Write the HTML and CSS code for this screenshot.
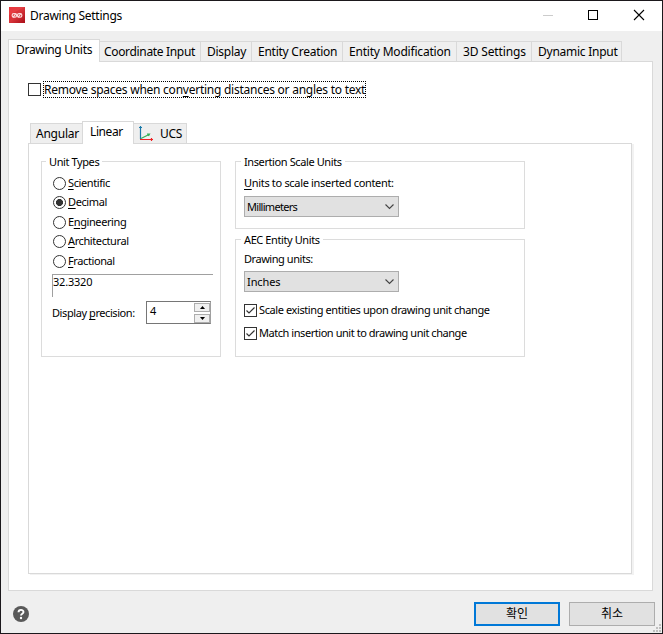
FILE: index.html
```html
<!DOCTYPE html>
<html lang="ko">
<head>
<meta charset="utf-8">
<title>Drawing Settings</title>
<link rel="stylesheet" href="styles.css">
</head>
<body>
<div class="window">
  <header class="titlebar">
    <svg class="app-icon" width="16" height="16" viewBox="0 0 16 16"><defs><linearGradient id="red" x1="0" y1="0" x2="1" y2="1"><stop offset="0" stop-color="#e4242c"/><stop offset=".5" stop-color="#d8343a"/><stop offset="1" stop-color="#a90d18"/></linearGradient></defs><rect width="16" height="16" fill="url(#red)"/><path d="M0 0H16L0 8Z" fill="#ff6b6b" opacity=".25"/><g fill="none" stroke="#fbdcdc" stroke-width="1.200"><rect x="3.200" y="6.600" width="4.300" height="3.600" rx="1.500"/><rect x="8.500" y="6.600" width="4.300" height="3.600" rx="1.500"/><path d="M4 10.300L7 6.500M9 10.300L12 6.500"/></g></svg>
    <h1 class="title">Drawing Settings</h1>
    <svg class="controls" width="110" height="14" viewBox="0 0 110 14" fill="none"><path d="M2 7.500H12" stroke="#ccc"/><rect x="47.500" y="2.500" width="9" height="9" stroke="#000"/><path d="M93 2L103 12M103 2L93 12" stroke="#000" stroke-width="1.100"/></svg>
  </header>

  <nav class="tabs">
    <div class="tab active t1">Drawing Units</div>
    <div class="tab t2">Coordinate Input</div>
    <div class="tab t3">Display</div>
    <div class="tab t4">Entity Creation</div>
    <div class="tab t5">Entity Modification</div>
    <div class="tab t6">3D Settings</div>
    <div class="tab t7">Dynamic Input</div>
  </nav>

  <main class="panel">
    <label class="remove"><span class="box"></span><span class="focus">Remove spaces when con<u>v</u>erting distances or angles to text</span></label>
    <nav class="tabs inner">
      <div class="tab a1">Angular</div>
      <div class="tab active a2">Linear</div>
      <div class="tab a3"><svg width="16" height="16" viewBox="0 0 16 16" fill="none"><path d="M2.500 13V0M1 1.500H4" stroke="#1878a8" stroke-width="1.200"/><path d="M3 12.500L11 8.500M9 8H11.500L10.500 10" stroke="#35b158" stroke-width="1.200"/><path d="M2 13.500H15M13.500 12V15" stroke="#ed2224" stroke-width="1.200"/></svg>UCS</div>
    </nav>
    <section class="page">
      <div class="group types">
        <div class="legend">Unit Types</div>
        <div class="radios">
          <label><i></i><span><u>S</u>cientific</span></label>
          <label><i class="on"></i><span><u>D</u>ecimal</span></label>
          <label><i></i><span>E<u>n</u>gineering</span></label>
          <label><i></i><span><u>A</u>rchitectural</span></label>
          <label><i></i><span><u>F</u>ractional</span></label>
        </div>
        <div class="sample">32.3320</div>
        <div class="precision">
          <span>Display <u>p</u>recision:</span>
          <div class="spin"><span>4</span><div class="arrows"><b><svg width="5" height="3"><path d="M0 3L2.500 0L5 3Z"/></svg></b><b><svg width="5" height="3"><path d="M0 0L2.500 3L5 0Z"/></svg></b></div></div>
        </div>
      </div>
      <div class="column">
        <div class="group insertion">
          <div class="legend">Insertion Scale Units</div>
          <div class="field"><u>U</u>nits to scale inserted content:</div>
          <div class="combo millimeters"><span>Millimeters</span><svg width="9" height="6" fill="none"><path d="M.5 .5L4.500 4.500L8.500 .5" stroke="#444" stroke-width="1.100"/></svg></div>
        </div>
        <div class="group aec">
          <div class="legend">AEC Entity Units</div>
          <div class="field">Drawing units:</div>
          <div class="combo inches"><span>Inches</span><svg width="9" height="6" fill="none"><path d="M.5 .5L4.500 4.500L8.500 .5" stroke="#444" stroke-width="1.100"/></svg></div>
          <label class="check"><span class="box"><svg width="11" height="11" fill="none"><path d="M1.500 5.500L4 8L9.500 2.500" stroke="#333" stroke-width="1.200"/></svg></span><span>Scale existing entities upon drawing unit change</span></label>
          <label class="check"><span class="box"><svg width="11" height="11" fill="none"><path d="M1.500 5.500L4 8L9.500 2.500" stroke="#333" stroke-width="1.200"/></svg></span><span class="match">Match insertion unit to drawing unit change</span></label>
        </div>
      </div>
    </section>
  </main>

  <footer class="footer">
    <svg width="16" height="16" viewBox="0 0 16 16"><circle cx="8" cy="8" r="8" fill="#595959"/><path d="M5.500 6.300C5.500 3 10.500 3.200 10.500 6C10.500 7.700 8 7.700 8 9.500" fill="none" stroke="#fff" stroke-width="1.900"/><circle cx="8" cy="12" r="1.200" fill="#fff"/></svg>
    <button class="btn primary">확인</button>
    <button class="btn">취소</button>
  </footer>
  <svg class="grip" width="8" height="8" fill="#bfbfbf"><path d="M6 0h2v2h-2zM3 3h2v2h-2zM6 3h2v2h-2zM0 6h2v2h-2zM3 6h2v2h-2zM6 6h2v2h-2z"/></svg>
</div>
</body>
</html>
```
FILE: styles.css
```css
* { box-sizing: border-box; }
body { margin: 0; font: 12px/16px "Noto Sans", "Noto Sans CJK KR", sans-serif; color: #000; }
svg { display: block; flex: none; }
u { text-decoration: underline; text-underline-offset: 2px; text-decoration-thickness: 1px; text-decoration-skip-ink: none; }
.window { position: relative; width: 663px; height: 634px; border: 1px solid #1b181c; background: #efefef; display: flex; flex-direction: column; overflow: hidden; white-space: nowrap; }
.titlebar { height: 30px; flex: none; background: #fff; display: flex; align-items: center; padding: 0 11px 2px 8px; }
.title { margin: 2px 0 0 5px; font-size: 12px; font-weight: 400; letter-spacing: -.27px; }
.controls { margin-left: auto; }
.tabs { height: 23px; margin: 8px 0 -1px 7px; display: flex; align-items: flex-end; position: relative; flex: none; letter-spacing: -.25px; }
.tab { height: 21px; border: 1px solid #d9d9d9; border-left: 0; padding: 2px 0 0 4px; background: #efefef; flex: none; }
.tab.active { height: 23px; border-left: 1px solid #d9d9d9; border-bottom: 0; background: #fff; padding: 2px 0 0 7px; }
.t1 { width: 92px; letter-spacing: -.3px; }
.t2 { width: 101px; letter-spacing: -.33px; }
.t3 { width: 51px; padding-left: 6px; }
.t4 { width: 91px; padding-left: 6px; }
.t5 { width: 114px; padding-left: 6px; letter-spacing: -.2px; }
.t6 { width: 75px; padding-left: 6px; letter-spacing: -.15px; }
.t7 { width: 90px; padding-left: 6px; }
.panel { margin-left: 7px; width: 645px; height: 530px; flex: none; background: #fff; border: 1px solid #d9d9d9; padding: 18px 0 0 19px; }
.remove { display: flex; align-items: center; height: 18px; }
.box { width: 13px; height: 13px; border: 1px solid #333; background: #fff; flex: none; }
.focus { width: 323px; height: 17px; line-height: 15px; margin-left: 2px; border: 1px dotted #000; letter-spacing: -.25px; }
.inner { margin: 23px 0 -1px 2px; }
.inner .a1 { border-left: 1px solid #d9d9d9; border-right: 0; padding-left: 5px; width: 52px; }
.inner .a2 { width: 52px; padding: 2px 0 0 7px; letter-spacing: -.4px; }
.inner .a3 { width: 53px; padding: 2px 0 0 4px; display: flex; gap: 6px; }
.page { width: 604px; height: 431px; border: 1px solid #d9d9d9; box-shadow: 2px 1px 0 #f2f2f2; padding: 17px 0 0 12px; display: flex; gap: 14px; align-items: flex-start; font-size: 11px; line-height: 14px; letter-spacing: -.4px; }
.group { border: 1px solid #dcdcdc; }
.legend { width: max-content; background: #fff; padding: 0 3px; height: 14px; margin: -7px 0 0 5px; }
.types { width: 180px; height: 196px; }
.types .legend { margin-left: 4px; }
.radios { margin: 7px 0 0 11px; display: grid; grid-template-rows: 19px 20px 19px 20px 19px; }
.radios label { display: flex; align-items: center; height: 14px; gap: 2px; }
.radios i { width: 13px; height: 13px; border: 1px solid #333; border-radius: 50%; flex: none; }
.radios .on { background: radial-gradient(circle, #333 0 3.2px, #fff 3.8px); }
.sample { width: 161px; height: 23px; margin: 1px 0 0 10px; border: solid #a0a0a0; border-width: 1px 0 0 1px; letter-spacing: -.2px; }
.precision { margin: 4px 0 0 10px; display: flex; align-items: center; width: 159px; justify-content: space-between; }
.precision > span { letter-spacing: -.42px; }
.spin { width: 65px; height: 23px; border: 1px solid #a0a0a0; border-color: #767676 #a0a0a0 #767676 #767676; display: flex; justify-content: space-between; padding: 2px 0 0 3px; }
.arrows { display: grid; gap: 1px; margin-top: -1px; }
.arrows b { width: 16px; height: 9px; border: 1px solid #adadad; background: #f0f0f0; display: flex; align-items: center; justify-content: center; }
.column { display: grid; gap: 10px; }
.column .group { width: 290px; }
.insertion { height: 68px; }
.aec { height: 118px; }
.field { margin: 5px 0 0 8px; letter-spacing: -.32px; }
.aec .field { letter-spacing: -.45px; }
.insertion .field { margin-top: 7px; }
.combo { width: 155px; height: 21px; margin: 6px 0 0 8px; border: 1px solid #adadad; background: #e1e1e1; display: flex; align-items: center; justify-content: space-between; padding: 0 4px 0 2px; }
.combo span { padding-top: 1px; }
.millimeters { letter-spacing: -.7px; }
.inches { letter-spacing: -.1px; }
.check { display: flex; align-items: center; height: 14px; margin: 9px 0 0 8px; gap: 2px; }
.match { letter-spacing: -.45px; }
.aec .combo { margin: 5px 0 11px 8px; }
.footer { display: flex; align-items: center; height: 24px; margin: 11px 7px 0 12px; gap: 9px; }
.footer svg { margin-right: auto; }
.btn { width: 86px; height: 24px; border: 1px solid #adadad; background: #e1e1e1; padding: 0 0 2px; font: 12px/16px "Noto Sans CJK KR", sans-serif; color: #000; }
.primary { border: 2px solid #0078d7; }
.grip { position: absolute; right: 1px; bottom: 1px; }
```
